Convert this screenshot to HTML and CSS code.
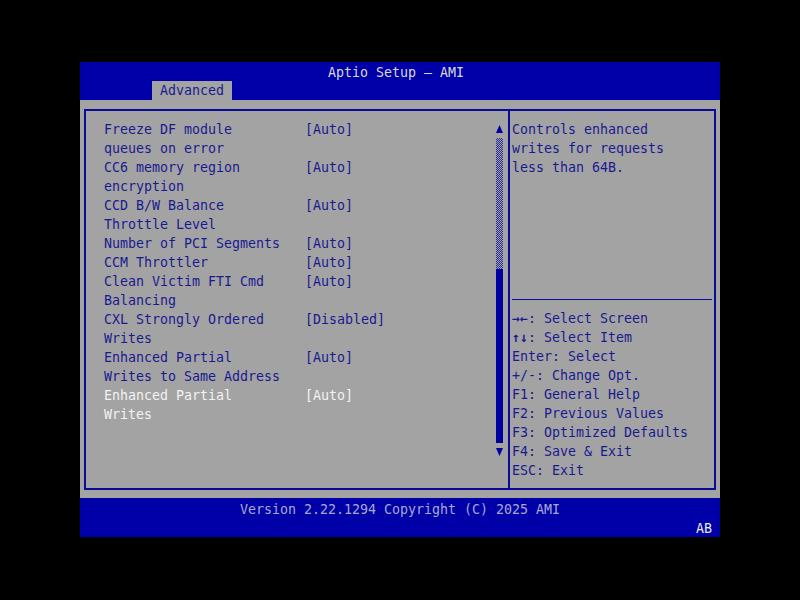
FILE: index.html
```html
<!DOCTYPE html>
<html lang="en">
<head>
  <meta charset="utf-8" />
  <title>Aptio Setup - AMI</title>
<link rel="stylesheet" href="styles.css">
</head>
<body>
<div class="screen">
  <div class="header">
    <div class="title">Aptio Setup – AMI</div>
    <div class="tabs"><span class="tab">Advanced</span></div>
  </div>

  <div class="main">
    <div class="frame">
      <!-- setting list -->
      <div class="items">
        <div class="list">
          <div class="item"><div class="label">Freeze DF module<br>queues on error</div><div class="value">[Auto]</div></div>
          <div class="item"><div class="label">CC6 memory region<br>encryption</div><div class="value">[Auto]</div></div>
          <div class="item"><div class="label">CCD B/W Balance<br>Throttle Level</div><div class="value">[Auto]</div></div>
          <div class="item"><div class="label">Number of PCI Segments</div><div class="value">[Auto]</div></div>
          <div class="item"><div class="label">CCM Throttler</div><div class="value">[Auto]</div></div>
          <div class="item"><div class="label">Clean Victim FTI Cmd<br>Balancing</div><div class="value">[Auto]</div></div>
          <div class="item"><div class="label">CXL Strongly Ordered<br>Writes</div><div class="value">[Disabled]</div></div>
          <div class="item"><div class="label">Enhanced Partial<br>Writes to Same Address</div><div class="value">[Auto]</div></div>
          <div class="item selected"><div class="label">Enhanced Partial<br>Writes</div><div class="value">[Auto]</div></div>
        </div>
        <div class="scrollbar">
          <svg class="arrow" width="7" height="8" viewBox="0 0 7 8"><path d="M3.5 0 L7 8 L0 8 Z" fill="#0000a0"/></svg>
          <div class="track"></div>
          <div class="thumb"></div>
          <svg class="arrow" width="7" height="8" viewBox="0 0 7 8"><path d="M0 0 L7 0 L3.5 8 Z" fill="#0000a0"/></svg>
        </div>
      </div>

      <!-- help panel -->
      <div class="side">
        <div class="help">Controls enhanced<br>writes for requests<br>less than 64B.</div>
        <div class="keys">
          <div><b>→←</b>: Select Screen</div>
          <div><b>↑↓</b>: Select Item</div>
          <div>Enter: Select</div>
          <div>+/-: Change Opt.</div>
          <div>F1: General Help</div>
          <div>F2: Previous Values</div>
          <div>F3: Optimized Defaults</div>
          <div>F4: Save &amp; Exit</div>
          <div>ESC: Exit</div>
        </div>
      </div>
    </div>
  </div>

  <div class="footer">
    <div class="version">Version 2.22.1294 Copyright (C) 2025 AMI</div>
    <div class="badge">AB</div>
  </div>
</div>
</body>
</html>
```

FILE: styles.css
```css
body{
  margin: 0;
  background: #000;
  font-family: 'DejaVu Sans Mono', 'Liberation Mono', monospace;
  font-size: 13.3px;
  line-height: 19px;
}
.screen{
  width: 640px;
  margin: 62px 0 0 80px;
}
.header{
  background: #0000a8;
  height: 38px;
}
.title{
  color: #d8d8d8;
  text-align: center;
  padding: 1px 8px 0 0;
  height: 18px;
}
.tabs{
  padding-left: 72px;
  height: 19px;
}
.tab{
  display: inline-block;
  background: #a3a3a3;
  color: #1a1a90;
  padding: 1px 8px 0 8px;
  height: 18px;
  line-height: 18px;
}
.main{
  background: #a3a3a3;
  height: 398px;
  padding: 9px 4px 0 4px;
  box-sizing: border-box;
}
.frame{
  display: flex;
  height: 381px;
  border: 2px solid #0a0a98;
  box-sizing: border-box;
}
.items{
  display: flex;
  width: 422px;
  border-right: 2px solid #0a0a98;
}
.list{
  width: 392px;
  padding: 9px 0 0 18px;
}
.item{
  display: flex;
  color: #1a1a90;
}
.item .label{
  width: 201px;
}
.item.selected{
  color: #f2f2f2;
}
.scrollbar{
  display: flex;
  flex-direction: column;
  width: 7px;
  padding-top: 14px;
}
.arrow{
  display: block;
}
.track{
  margin-top: 5px;
  height: 131px;
  background: repeating-conic-gradient(#2a2aa0 0 25%, transparent 0 50%) 0 0 / 2px 2px;
}
.thumb{
  height: 174px;
  background: #0000a0;
  margin-bottom: 5px;
}
.side{
  width: 204px;
  padding: 9px 2px 0 2px;
  box-sizing: border-box;
  color: #1a1a90;
}
.help{
  height: 179px;
  border-bottom: 1px solid #0a0a98;
  margin-bottom: 9px;
}
.footer{
  background: #0000a8;
  height: 39px;
  padding-top: 2px;
  box-sizing: border-box;
}
.version{
  color: #a8a8d0;
  text-align: center;
}
.badge{
  color: #e8e8e8;
  text-align: right;
  padding-right: 8px;
}
```
